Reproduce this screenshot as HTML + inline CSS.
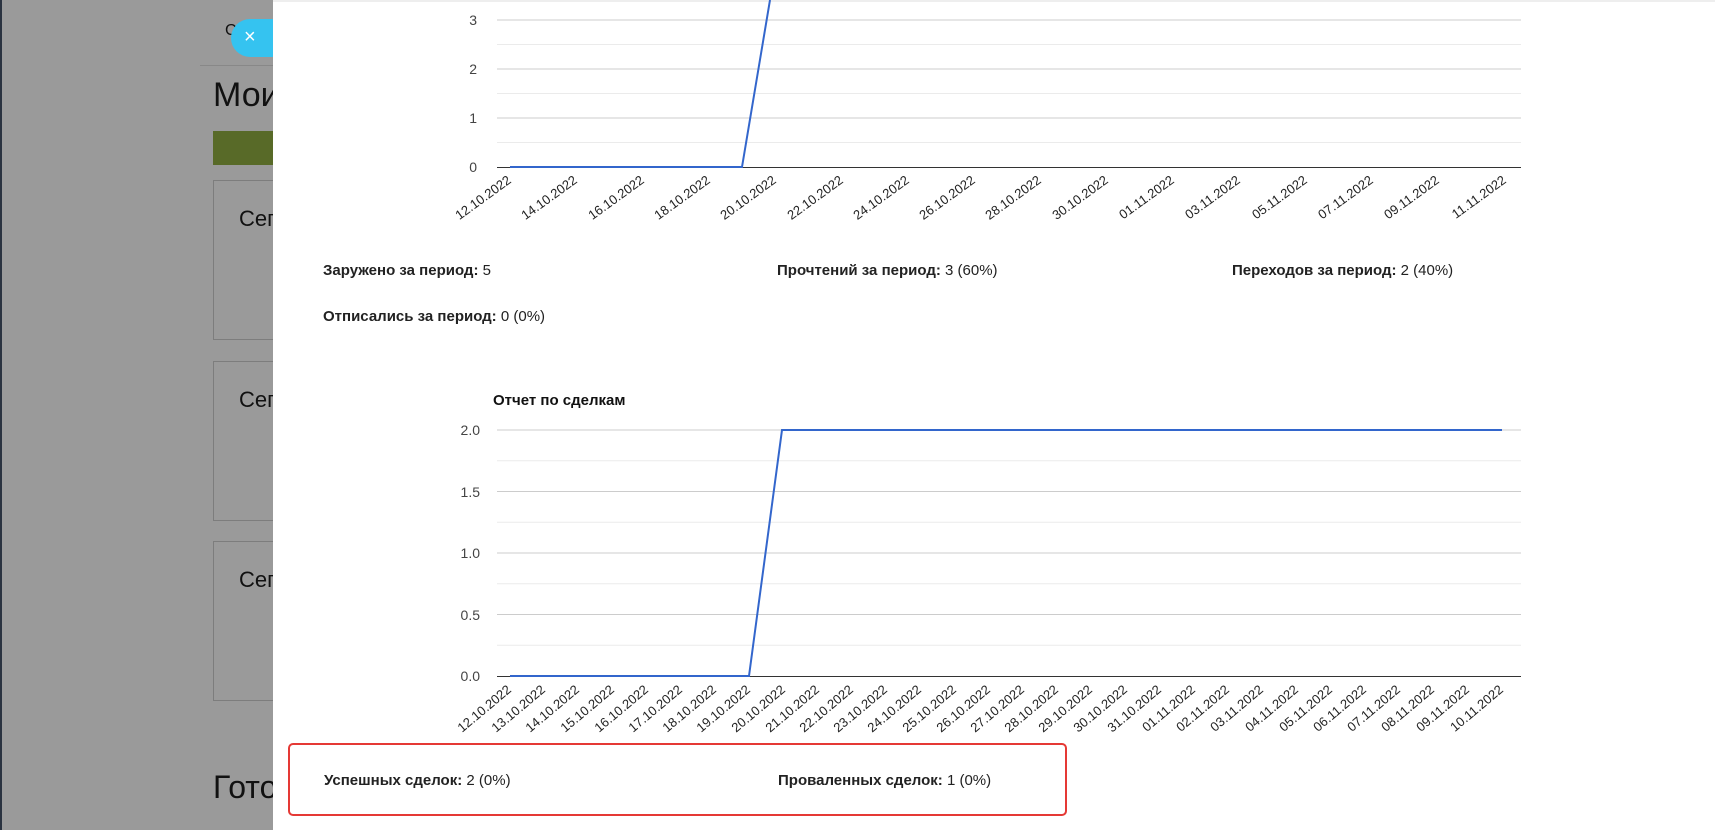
<!DOCTYPE html>
<html><head><meta charset="utf-8"><style>
body{margin:0;width:1715px;height:830px;overflow:hidden;background:#9a9a9a;font-family:"Liberation Sans","DejaVu Sans",sans-serif;position:relative}
.a{position:absolute}
.card{position:absolute;left:213px;width:80px;height:158px;border:1px solid #7d7d7d}
.panel{position:absolute;left:273px;top:0;width:1442px;height:830px;background:#fff;border-top:2px solid #eee;box-sizing:border-box}
.st{position:absolute;font-size:15px;color:#222}
.st b{font-weight:bold}
</style></head><body>
<div class="a" style="left:0;top:0;width:2px;height:830px;background:#2a3340"></div>
<div class="a" style="left:225px;top:22px;font-size:16px;color:#111">С</div>
<div class="a" style="left:200px;top:65px;width:80px;height:1px;background:#888"></div>
<div class="a" style="left:213px;top:76px;font-size:34px;color:#111">Мои</div>
<div class="a" style="left:213px;top:131px;width:70px;height:34px;background:#586a28"></div>
<div class="card" style="top:180px"></div>
<div class="card" style="top:361px"></div>
<div class="card" style="top:541px"></div>
<div class="a" style="left:239px;top:206px;font-size:22px;color:#111">Сег</div>
<div class="a" style="left:239px;top:387px;font-size:22px;color:#111">Сег</div>
<div class="a" style="left:239px;top:567px;font-size:22px;color:#111">Сег</div>
<div class="a" style="left:213px;top:769px;font-size:32px;color:#111">Гото</div>
<div class="a" style="left:231px;top:19px;width:60px;height:38px;border-radius:19px;background:#35c3f0;color:#fff;font-size:20px;line-height:36px;padding-left:13px;box-sizing:border-box">×</div>
<div class="panel"></div>
<svg class="a" style="left:0;top:0" width="1715" height="830" font-family="Liberation Sans, sans-serif">
<g stroke="#ebebeb"><line x1="497" x2="1521" y1="142.5" y2="142.5"/><line x1="497" x2="1521" y1="93.5" y2="93.5"/><line x1="497" x2="1521" y1="44.5" y2="44.5"/>
<line x1="497" x2="1521" y1="460.75" y2="460.75"/><line x1="497" x2="1521" y1="522.25" y2="522.25"/><line x1="497" x2="1521" y1="583.75" y2="583.75"/><line x1="497" x2="1521" y1="645.25" y2="645.25"/></g>
<g stroke="#ccc"><line x1="497" x2="1521" y1="118" y2="118"/><line x1="497" x2="1521" y1="69" y2="69"/><line x1="497" x2="1521" y1="20" y2="20"/>
<line x1="497" x2="1521" y1="430" y2="430"/><line x1="497" x2="1521" y1="491.5" y2="491.5"/><line x1="497" x2="1521" y1="553" y2="553"/><line x1="497" x2="1521" y1="614.5" y2="614.5"/></g>
<g stroke="#333"><line x1="497" x2="1521" y1="167.5" y2="167.5"/><line x1="497" x2="1521" y1="676.5" y2="676.5"/></g>
<g fill="none" stroke="#3366cc" stroke-width="2"><path d="M510 167 L742 167 L770 0"/><path d="M510 676 L749 676 L782 430 L1502 430"/></g>
<g font-size="14" fill="#444" text-anchor="end"><text x="477" y="25">3</text><text x="477" y="74">2</text><text x="477" y="123">1</text><text x="477" y="172">0</text>
<text x="480" y="435">2.0</text><text x="480" y="497">1.5</text><text x="480" y="558">1.0</text><text x="480" y="620">0.5</text><text x="480" y="681">0.0</text></g>
<g font-size="13" fill="#222" text-anchor="end">
<text transform="translate(512,182) rotate(-36)">12.10.2022</text>
<text transform="translate(578,182) rotate(-36)">14.10.2022</text>
<text transform="translate(645,182) rotate(-36)">16.10.2022</text>
<text transform="translate(711,182) rotate(-36)">18.10.2022</text>
<text transform="translate(777,182) rotate(-36)">20.10.2022</text>
<text transform="translate(844,182) rotate(-36)">22.10.2022</text>
<text transform="translate(910,182) rotate(-36)">24.10.2022</text>
<text transform="translate(976,182) rotate(-36)">26.10.2022</text>
<text transform="translate(1042,182) rotate(-36)">28.10.2022</text>
<text transform="translate(1109,182) rotate(-36)">30.10.2022</text>
<text transform="translate(1175,182) rotate(-36)">01.11.2022</text>
<text transform="translate(1241,182) rotate(-36)">03.11.2022</text>
<text transform="translate(1308,182) rotate(-36)">05.11.2022</text>
<text transform="translate(1374,182) rotate(-36)">07.11.2022</text>
<text transform="translate(1440,182) rotate(-36)">09.11.2022</text>
<text transform="translate(1507,182) rotate(-36)">11.11.2022</text>
</g>
<g font-size="13" fill="#222" text-anchor="end">
<text transform="translate(512,691) rotate(-40)">12.10.2022</text>
<text transform="translate(546,691) rotate(-40)">13.10.2022</text>
<text transform="translate(580,691) rotate(-40)">14.10.2022</text>
<text transform="translate(615,691) rotate(-40)">15.10.2022</text>
<text transform="translate(649,691) rotate(-40)">16.10.2022</text>
<text transform="translate(683,691) rotate(-40)">17.10.2022</text>
<text transform="translate(717,691) rotate(-40)">18.10.2022</text>
<text transform="translate(751,691) rotate(-40)">19.10.2022</text>
<text transform="translate(786,691) rotate(-40)">20.10.2022</text>
<text transform="translate(820,691) rotate(-40)">21.10.2022</text>
<text transform="translate(854,691) rotate(-40)">22.10.2022</text>
<text transform="translate(888,691) rotate(-40)">23.10.2022</text>
<text transform="translate(922,691) rotate(-40)">24.10.2022</text>
<text transform="translate(957,691) rotate(-40)">25.10.2022</text>
<text transform="translate(991,691) rotate(-40)">26.10.2022</text>
<text transform="translate(1025,691) rotate(-40)">27.10.2022</text>
<text transform="translate(1059,691) rotate(-40)">28.10.2022</text>
<text transform="translate(1093,691) rotate(-40)">29.10.2022</text>
<text transform="translate(1128,691) rotate(-40)">30.10.2022</text>
<text transform="translate(1162,691) rotate(-40)">31.10.2022</text>
<text transform="translate(1196,691) rotate(-40)">01.11.2022</text>
<text transform="translate(1230,691) rotate(-40)">02.11.2022</text>
<text transform="translate(1264,691) rotate(-40)">03.11.2022</text>
<text transform="translate(1299,691) rotate(-40)">04.11.2022</text>
<text transform="translate(1333,691) rotate(-40)">05.11.2022</text>
<text transform="translate(1367,691) rotate(-40)">06.11.2022</text>
<text transform="translate(1401,691) rotate(-40)">07.11.2022</text>
<text transform="translate(1435,691) rotate(-40)">08.11.2022</text>
<text transform="translate(1470,691) rotate(-40)">09.11.2022</text>
<text transform="translate(1504,691) rotate(-40)">10.11.2022</text>
</g>
<text x="493" y="405" font-size="15" font-weight="bold" fill="#111">Отчет по сделкам</text>
<rect x="289" y="744" width="777" height="71" rx="4" fill="none" stroke="#e53935" stroke-width="2"/>
</svg>
<div class="st" style="left:323px;top:262px"><b>Заружено за период:</b> 5</div>
<div class="st" style="left:777px;top:262px"><b>Прочтений за период:</b> 3 (60%)</div>
<div class="st" style="left:1232px;top:262px"><b>Переходов за период:</b> 2 (40%)</div>
<div class="st" style="left:323px;top:308px"><b>Отписались за период:</b> 0 (0%)</div>
<div class="st" style="left:324px;top:772px"><b>Успешных сделок:</b> 2 (0%)</div>
<div class="st" style="left:778px;top:772px"><b>Проваленных сделок:</b> 1 (0%)</div>
</body></html>
